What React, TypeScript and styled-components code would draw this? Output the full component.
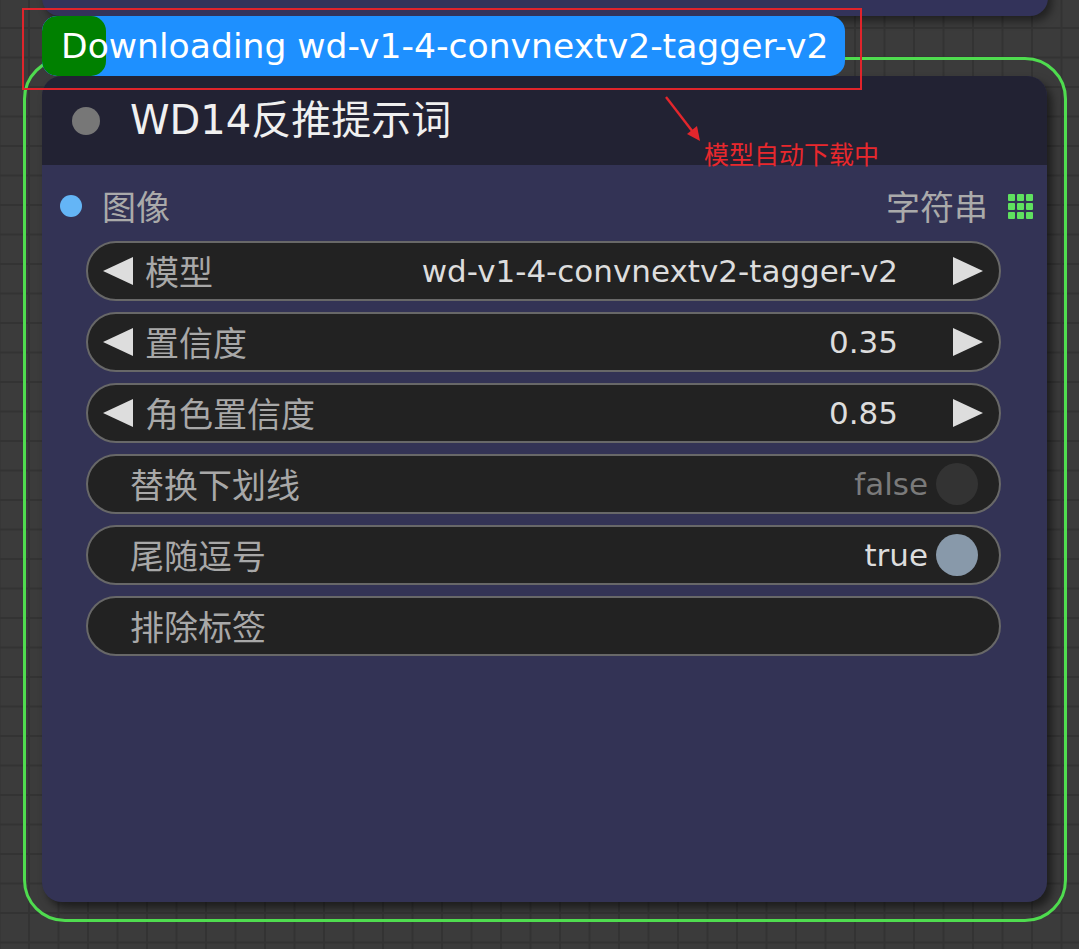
import React from 'react';
import styled, { createGlobalStyle } from 'styled-components';

const GlobalStyle = createGlobalStyle`
  html, body {
    margin: 0;
    padding: 0;
    background: #3b3b3b;
  }
  * {
    box-sizing: border-box;
  }
`;

const FONT = `"DejaVu Sans", "Noto Sans CJK SC", sans-serif`;
const CJK = `"Noto Sans CJK SC", "DejaVu Sans", sans-serif`;

type WidgetKind = 'combo' | 'number' | 'toggle' | 'text';

interface WidgetData {
  kind: WidgetKind;
  label: string;
  value?: string;
  on?: boolean;
}

const widgets: WidgetData[] = [
  { kind: 'combo', label: '模型', value: 'wd-v1-4-convnextv2-tagger-v2' },
  { kind: 'number', label: '置信度', value: '0.35' },
  { kind: 'number', label: '角色置信度', value: '0.85' },
  { kind: 'toggle', label: '替换下划线', value: 'false', on: false },
  { kind: 'toggle', label: '尾随逗号', value: 'true', on: true },
  { kind: 'text', label: '排除标签' },
];

function Arrow({ dir }: { dir: 'left' | 'right' }) {
  return (
    <svg width="30" height="28" viewBox="0 0 30 28">
      {dir === 'left' ? (
        <polygon points="30,0 30,28 0,14" fill="#dddddd" />
      ) : (
        <polygon points="0,0 0,28 30,14" fill="#dddddd" />
      )}
    </svg>
  );
}

function ListIcon() {
  const cells = [];
  for (let r = 0; r < 3; r++) {
    for (let c = 0; c < 3; c++) {
      cells.push(
        <rect key={`${r}-${c}`} x={c * 9} y={r * 9} width="7" height="7" rx="1" fill="#5fe05f" />
      );
    }
  }
  return (
    <svg width="25" height="25" viewBox="0 0 25 25">
      {cells}
    </svg>
  );
}

function Widget({ data }: { data: WidgetData }) {
  if (data.kind === 'toggle') {
    return (
      <WidgetRow $pad="0 21px 0 42px">
        <Label>{data.label}</Label>
        <Value $dim={!data.on}>{data.value}</Value>
        <Knob $on={!!data.on} />
      </WidgetRow>
    );
  }
  if (data.kind === 'text') {
    return (
      <WidgetRow $pad="0 21px 0 42px">
        <Label>{data.label}</Label>
      </WidgetRow>
    );
  }
  return (
    <WidgetRow $pad="0 16px 0 15px">
      <Arrow dir="left" />
      <Label $gap>{data.label}</Label>
      <Value>{data.value}</Value>
      <RightArrow>
        <Arrow dir="right" />
      </RightArrow>
    </WidgetRow>
  );
}

export default function App() {
  return (
    <>
      <GlobalStyle />
      <Canvas>
        <UpperNode />
        <Selection>
          <Node>
            <TitleBar>
              <TitleDot />
              <Title>WD14反推提示词</Title>
            </TitleBar>
            <Body>
              <SlotRow>
                <Slot>
                  <InputDot />
                  <SlotName>图像</SlotName>
                </Slot>
                <Slot>
                  <SlotName>字符串</SlotName>
                  <ListIcon />
                </Slot>
              </SlotRow>
              <WidgetList>
                {widgets.map((w) => (
                  <Widget key={w.label} data={w} />
                ))}
              </WidgetList>
            </Body>
          </Node>
        </Selection>
        <Badge>
          <BadgeText>Downloading wd-v1-4-convnextv2-tagger-v2</BadgeText>
        </Badge>
        <RedBox />
        <Pointer width="40" height="50" viewBox="0 0 40 50">
          <line x1="2" y1="2" x2="32" y2="41" stroke="#e3262c" strokeWidth="2.4" />
          <polygon points="36,46 23,39 33,31" fill="#e3262c" />
        </Pointer>
        <Note>模型自动下载中</Note>
      </Canvas>
    </>
  );
}

const Canvas = styled.div`
  position: relative;
  width: 1079px;
  height: 949px;
  overflow: hidden;
  background-color: #3b3b3b;
  background-image:
    linear-gradient(to right, #333333 1.5px, transparent 1.5px),
    linear-gradient(to bottom, #333333 1.5px, transparent 1.5px);
  background-size: 29.5px 29.5px;
  background-position: 28px 27px;
`;

const UpperNode = styled.div`
  position: absolute;
  left: 42px;
  top: -40px;
  width: 1006px;
  height: 56px;
  background: #33335a;
  border-radius: 0 0 18px 18px;
  box-shadow: 4px 5px 9px rgba(0, 0, 0, 0.45);
`;

const Selection = styled.div`
  position: absolute;
  left: 23px;
  top: 57px;
  width: 1044px;
  height: 865px;
  border: 3px solid #4fdc4f;
  border-radius: 42px;
  padding: 16px 17px 17px 16px;
`;

const Node = styled.div`
  display: flex;
  flex-direction: column;
  height: 100%;
  background: #333355;
  border-radius: 20px;
  overflow: hidden;
  box-shadow: 5px 6px 9px rgba(0, 0, 0, 0.5);
`;

const TitleBar = styled.div`
  display: flex;
  align-items: center;
  gap: 30px;
  height: 89px;
  padding-left: 30px;
  background: #222233;
`;

const TitleDot = styled.div`
  width: 28px;
  height: 28px;
  border-radius: 50%;
  background: #777777;
`;

const Title = styled.div`
  font-family: ${FONT};
  font-size: 40px;
  color: #f0f0f0;
  line-height: 1;
  margin-top: -2px;
`;

const Body = styled.div`
  display: flex;
  flex-direction: column;
  padding: 0 46px 0 44px;
`;

const SlotRow = styled.div`
  display: flex;
  justify-content: space-between;
  align-items: center;
  height: 34px;
  margin: 24px -32px 0 -26px;
`;

const Slot = styled.div`
  display: flex;
  align-items: center;
  gap: 20px;
`;

const InputDot = styled.div`
  width: 22px;
  height: 22px;
  border-radius: 50%;
  background: #64b5f6;
`;

const SlotName = styled.span`
  font-family: ${CJK};
  font-size: 34px;
  color: #aaaaaa;
  line-height: 1;
`;

const WidgetList = styled.div`
  display: flex;
  flex-direction: column;
  gap: 11px;
  margin-top: 18px;
`;

const WidgetRow = styled.div<{ $pad: string }>`
  display: flex;
  align-items: center;
  height: 60px;
  padding: ${({ $pad }) => $pad};
  background: #222222;
  border: 2px solid #686868;
  border-radius: 30px;
`;

const Label = styled.span<{ $gap?: boolean }>`
  flex: 1;
  margin-left: ${({ $gap }) => ($gap ? '12px' : '0')};
  font-family: ${CJK};
  font-size: 34px;
  color: #a8a8a8;
  line-height: 1;
`;

const Value = styled.span<{ $dim?: boolean }>`
  font-family: ${FONT};
  font-size: 31px;
  line-height: 1;
  color: ${({ $dim }) => ($dim ? '#7a7a7a' : '#dddddd')};
`;

const RightArrow = styled.span`
  display: flex;
  margin-left: 55px;
`;

const Knob = styled.div<{ $on: boolean }>`
  width: 42px;
  height: 42px;
  margin-left: 8px;
  border-radius: 50%;
  background: ${({ $on }) => ($on ? '#8899aa' : '#333333')};
`;

const Badge = styled.div`
  position: absolute;
  left: 42px;
  top: 16px;
  width: 803px;
  height: 60px;
  display: flex;
  align-items: center;
  padding-left: 19px;
  background: #1e90ff;
  border-radius: 15px;
  overflow: hidden;

  &::before {
    content: '';
    position: absolute;
    left: 0;
    top: 0;
    width: 64px;
    height: 100%;
    background: #008000;
    border-radius: 15px;
  }
`;

const BadgeText = styled.span`
  position: relative;
  font-family: ${FONT};
  font-size: 34.6px;
  color: #ffffff;
  line-height: 1;
  white-space: nowrap;
`;

const RedBox = styled.div`
  position: absolute;
  left: 22px;
  top: 8px;
  width: 840px;
  height: 82px;
  border: 2px solid #e0242b;
`;

const Pointer = styled.svg`
  position: absolute;
  left: 664px;
  top: 95px;
`;

const Note = styled.div`
  position: absolute;
  left: 704px;
  top: 140px;
  font-family: ${CJK};
  font-size: 25px;
  line-height: 1.1;
  color: #e8282d;
`;
